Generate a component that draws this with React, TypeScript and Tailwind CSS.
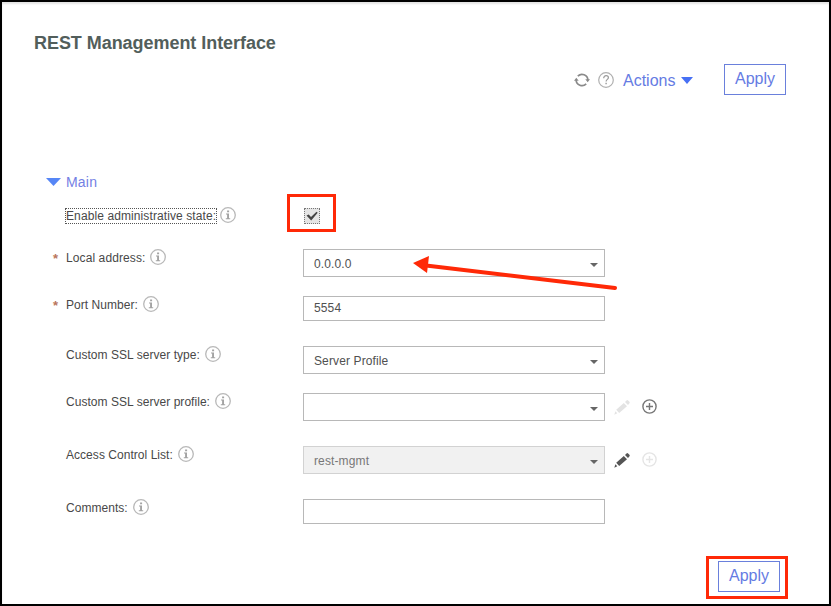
import type { ReactNode } from "react";

function InfoIcon() {
  return (
    <svg className="-mt-px ml-[5px] h-4 w-4 shrink-0" viewBox="0 0 16 16" fill="none">
      <circle cx="8" cy="8" r="7.3" stroke="#b8b8b8" strokeWidth="1.3" />
      <path d="M7.1 3.6h2v1.7h-2zM6 6.6h3v4.6h1.2v1H5.8v-1h1.3V7.6H6z" fill="#a3a3a3" />
    </svg>
  );
}

function Triangle({ className }: { className: string }) {
  return (
    <svg className={className} viewBox="0 0 16 8" preserveAspectRatio="none">
      <path d="M0 0h16L8 8z" fill="currentColor" />
    </svg>
  );
}

function Pencil({ className }: { className: string }) {
  return (
    <svg className={className} viewBox="0 0 16 16" fill="currentColor">
      <path d="M2.2 10.8 9.8 3.9l3.2 3.3-7.8 6.7zM11 3l1.5-1.6q.8-.7 1.6 0l1.3 1.4q.7.8-.1 1.6L14 5.9zM1.4 12.3l1.9 2-3 1.4z" />
    </svg>
  );
}

function Plus({ className }: { className: string }) {
  return (
    <svg className={className} viewBox="0 0 15 15" fill="none" stroke="currentColor">
      <circle cx="7.5" cy="7.5" r="6.6" strokeWidth="1.4" />
      <path d="M7.5 4v7M4 7.5h7" strokeWidth="1.4" />
    </svg>
  );
}

function ApplyButton() {
  return (
    <button className="flex h-[31px] w-[62px] items-center justify-center border border-[#6a80dc] pb-px text-[16px] leading-none text-[#657be3]">
      Apply
    </button>
  );
}

type RowProps = {
  label: string;
  spacing: string;
  labelStyle?: string;
  required?: boolean;
  children: ReactNode;
};

function Row({ label, spacing, labelStyle = "tracking-[0.04px]", required, children }: RowProps) {
  return (
    <div className={`flex items-start ${spacing}`}>
      <div className="flex h-[17px] w-[252px] items-center">
        <span className="w-[15px] pt-0.5 pl-0.5 text-[13px] leading-none font-bold text-[#b9765c]">
          {required ? "*" : ""}
        </span>
        <span className={`whitespace-nowrap text-[12px] leading-[14px] text-[#484848] ${labelStyle}`}>
          {label}
        </span>
        <InfoIcon />
      </div>
      {children}
    </div>
  );
}

function Field({ value = "", size, select, disabled }: { value?: string; size: string; select?: boolean; disabled?: boolean }) {
  return (
    <div
      className={`flex w-[302px] items-center justify-between border pr-[6px] pl-[10px] text-[12px] leading-none tracking-[0.12px] ${size} ${
        disabled ? "border-[#d2d2d2] bg-[#f1f1f1] text-[#777]" : "border-[#b8b8b8] bg-white text-[#505050]"
      }`}
    >
      <span>{value}</span>
      {select && <Triangle className="mt-px h-1 w-2 text-[#666]" />}
    </div>
  );
}

export default function App() {
  return (
    <main className="relative h-[606px] w-[831px] overflow-hidden border-2 border-black bg-white font-['Liberation_Sans',Arial,sans-serif] shadow-[inset_0_2px_2px_#e4e4e4]">
      <h1 className="ml-8 mt-[31px] h-5 text-[18px] leading-5 font-bold tracking-[-0.05px] text-[#525e5b]">
        REST Management Interface
      </h1>

      <header className="mt-[11px] ml-[572px] flex h-[31px] items-center">
        <svg className="h-4 w-4" viewBox="0 0 16 16" fill="none" stroke="#8a8a8a" strokeWidth="1.7">
          <path d="M3.8 4.1A5.9 5.9 0 0 1 13.9 8M12.2 11.9A5.9 5.9 0 0 1 2.1 8" />
          <path d="m11.3 7.2 4.7 0-2.3 3zM4.7 8.8H0l2.3-3z" fill="#8a8a8a" stroke="none" />
        </svg>
        <svg className="ml-2 h-4 w-4" viewBox="0 0 16 16" fill="none">
          <circle cx="8" cy="8" r="7.3" stroke="#b0b0b0" strokeWidth="1.2" />
          <path d="M5.7 6.2c0-1.6 1-2.5 2.4-2.5s2.3.8 2.3 2c0 1.7-2.3 1.7-2.3 3.8" stroke="#999" strokeWidth="1.2" />
          <path d="M7.4 10.8h1.4v1.5H7.4z" fill="#999" />
        </svg>
        <button className="ml-[9px] flex items-center pt-0.5 text-[16px] leading-none text-[#657be3]">
          <span className="w-[58px] text-left">Actions</span>
          <Triangle className="h-[7px] w-3 text-[#4770f4]" />
        </button>
        <div className="ml-[31px]">
          <ApplyButton />
        </div>
      </header>

      <section className="ml-[49px] pt-[79px]">
        <h2 className="-ml-[5px] flex h-4 items-center text-[14px] leading-4 tracking-[0.2px] text-[#7480e4]">
          <Triangle className="h-2 w-[15px] text-[#5686f6]" />
          <span className="ml-[5px]">Main</span>
        </h2>

        <Row
          label="Enable administrative state:"
          spacing="mt-[17px]"
          labelStyle="-mr-px outline-1 outline-dotted outline-[#555] tracking-[0.1px]"
        >
          <div className="relative ml-px mt-px h-4 w-4 border border-dotted border-[#777] bg-[#e5e5e5]">
            <svg className="h-full w-full" viewBox="0 0 14 14">
              <path d="m1.5 6.5 2.2-1 2.3 2.6 5.5-5.3 1.2 1L6.2 11.5z" fill="#444" />
            </svg>
            <span className="absolute -top-[15px] -left-[18px] h-[38px] w-[49px] border-3 border-[#ff2907]" />
          </div>
        </Row>
        <Row label="Local address:" labelStyle="tracking-[0.1px]" spacing="mt-[25px]" required>
          <Field value="0.0.0.0" size="h-7 pt-0.5" select />
        </Row>
        <Row label="Port Number:" spacing="mt-[19px]" required>
          <Field value="5554" size="h-[25px] pb-px" />
        </Row>
        <Row label="Custom SSL server type:" spacing="mt-[25px]">
          <Field value="Server Profile" size="h-7 pt-0.5" select />
        </Row>
        <Row label="Custom SSL server profile:" spacing="mt-[19px]">
          <Field size="h-7 pt-0.5" select />
          <Pencil className="mt-1.5 ml-[9px] h-4 w-4 text-[#e3e3e3]" />
          <Plus className="mt-[6px] ml-[12px] h-[15px] w-[15px] text-[#777]" />
        </Row>
        <Row label="Access Control List:" spacing="mt-[25px]">
          <Field value="rest-mgmt" size="h-7 pt-0.5" select disabled />
          <Pencil className="mt-1.5 ml-[9px] h-4 w-4 text-[#555]" />
          <Plus className="mt-[6px] ml-[12px] h-[15px] w-[15px] text-[#e5e5e5]" />
        </Row>
        <Row label="Comments:" spacing="mt-[25px]">
          <Field size="h-[25px]" />
        </Row>
      </section>

      <footer className="mt-[32px] ml-[704px] flex h-[43px] w-[82px] items-center border-3 border-[#ff2907] pb-[3px] pl-[9px]">
        <ApplyButton />
      </footer>

      <svg className="pointer-events-none absolute top-[248px] left-[408px] h-[50px] w-[212px]" viewBox="410 250 212 50">
        <path d="M426 265.5 615 288" stroke="#ff2907" strokeWidth="4" strokeLinecap="round" />
        <path d="m413 263 16-7-2 17z" fill="#ff2907" />
      </svg>
    </main>
  );
}
